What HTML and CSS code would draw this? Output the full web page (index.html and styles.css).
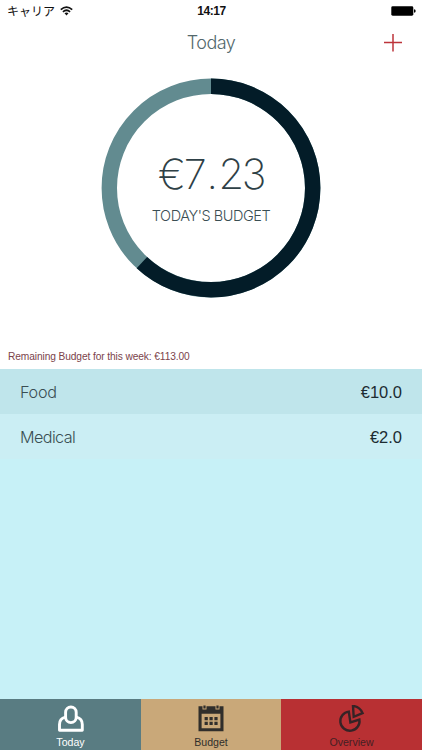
FILE: index.html
```
<!DOCTYPE html>
<html lang="en">
<head>
<meta charset="utf-8">
<title>Today</title>
<link rel="stylesheet" href="styles.css">
</head>
<body>
<div class="app">
  <header class="status">
    <div class="carrier"><span lang="ja">キャリア</span>
      <svg width="13" height="10" viewBox="0 0 13 10" fill="none" stroke="#111" stroke-width="1.7"><path d="M.8 3.6Q6.5-1.5 12.2 3.6M2.9 5.8Q6.5 2.7 10.1 5.8"/><path d="M4.5 7.3Q6.5 5.8 8.5 7.3L6.5 9.4Z" fill="#111" stroke="none"/></svg>
    </div>
    <div class="clock">14:17</div>
    <svg class="battery" width="25" height="10" viewBox="0 0 25 10"><rect x=".3" y=".3" width="22" height="9.4" rx="1.4"/><path d="M23 3.2q1.7.3 1.7 1.8T23 6.8z"/></svg>
  </header>
  <nav class="navbar">
    <h1 class="title">Today</h1>
    <svg class="add" width="18" height="18" viewBox="0 0 18 18" stroke="#bd343b" stroke-width="1.5"><path d="M0 8.5H18M9 0V17.5"/></svg>
  </nav>
  <main class="summary">
    <div class="dial">
      <svg class="ring" width="220" height="220" viewBox="0 0 220 220" fill="none" stroke-width="15.4">
        <circle cx="110" cy="110" r="101.7" stroke="#628b90"/>
        <circle cx="110" cy="110" r="101.7" stroke="#031c28" pathLength="1000" stroke-dasharray="619 381" transform="rotate(-90 110 110)"/>
      </svg>
      <div class="amount">€7<span class="point">.</span>23</div>
      <div class="caption">TODAY'S BUDGET</div>
    </div>
    <p class="remaining">Remaining Budget for this week: €113.00</p>
  </main>
  <ul class="expenses">
    <li class="row row-dark"><span class="name food">Food</span><span class="value">€10.0</span></li>
    <li class="row"><span class="name">Medical</span><span class="value">€2.0</span></li>
  </ul>
  <footer class="tabs">
    <div class="tab tab-today">
      <svg width="28" height="28" viewBox="0 0 28 28" fill="none" stroke="#fff" stroke-width="2.9" stroke-linejoin="round"><path d="M8.4 12.2C5 13 2.5 15.5 2.5 19.5V25.2H25.3V19.5C25.3 15.5 22.8 13 19.4 12.2"/><rect x="8.6" y="2" width="10.6" height="15.6" rx="5.3"/></svg>
      <span>Today</span>
    </div>
    <div class="tab tab-budget">
      <svg width="28" height="28" viewBox="0 0 28 28" fill="#302e2b"><path fill-rule="evenodd" d="M1.5 1.3H5.5V4.6H9.5V1.3H18.5V4.6H22.5V1.3H26.5V26.3H1.5ZM4.6 8.8V23.2H23.4V8.8Z"/><path d="M6.4 .4H8.6V3.5H6.4ZM19.4 .4H21.6V3.5H19.4Z"/><path d="M7.6 12h3.2v3.2H7.6zM12.5 12h3.2v3.2h-3.2zM17.4 12h3.2v3.2h-3.2zM7.6 16.8h3.2v3.2H7.6zM12.5 16.8h3.2v3.2h-3.2zM17.4 16.8h3.2v3.2h-3.2z"/></svg>
      <span>Budget</span>
    </div>
    <div class="tab tab-overview">
      <svg width="28" height="28" viewBox="0 0 28 28" fill="none" stroke="#352326" stroke-width="2.4" stroke-linejoin="miter"><path d="M10.8 6.6A9.6 9.6 0 1 0 21.4 14.6L12.4 17.4Z"/><path d="M15 .9L15.7 11.8L24.6 8.2C22.8 4 19.7 1.5 15 .9Z"/></svg>
      <span>Overview</span>
    </div>
  </footer>
</div>
</body>
</html>
```
FILE: styles.css
```
* { box-sizing: border-box; }
body {
  margin: 0;
  font-family: Inter, "Liberation Sans", "Noto Sans CJK JP", sans-serif;
  font-weight: 300;
  color: #3a4e53;
  background: #fff;
}
svg { display: block; }
.app { display: flex; flex-direction: column; height: 750px; overflow: hidden; }
.status {
  display: grid;
  grid-template-columns: 1fr auto 1fr;
  align-items: center;
  height: 22px;
  padding: 0 6px 0 7px;
  color: #111;
}
.carrier { display: flex; align-items: center; gap: 5px; font: 400 12px/20px "Noto Sans CJK JP", sans-serif; }
.clock { font: 700 12px/20px "Liberation Sans", sans-serif; letter-spacing: -0.4px; }
.battery { justify-self: end; }
.navbar {
  display: grid;
  grid-template-columns: 1fr auto 1fr;
  align-items: center;
  height: 42px;
  padding: 0 20px;
}
.title { grid-column: 2; margin: 0; font-size: 18px; line-height: 42px; font-weight: 300; letter-spacing: -0.5px; color: #52686c; }
.add { justify-self: end; }
.summary { height: 305px; padding: 14px 8px 0; }
.dial {
  display: grid;
  grid-template-rows: 74px 44px 40px;
  justify-items: center;
  width: 220px;
  height: 220px;
  margin: 0 auto;
}
.ring { grid-area: 1 / 1 / 4 / 2; height: 220px; }
.amount { grid-area: 2 / 1; font-size: 41.5px; line-height: 44px; font-weight: 200; letter-spacing: -2.3px; color: #2e4046; }
.point { padding: 0 3px 0 2px; }
.caption { grid-area: 3 / 1; font-size: 14.5px; line-height: 40px; letter-spacing: -0.45px; }
.remaining { margin: 50.5px 0 0; font: 400 10.2px/16px "Liberation Sans", sans-serif; letter-spacing: -0.1px; color: #7b434b; }
.expenses { flex: 1; margin: 0; padding: 0; list-style: none; background: #c7f1f7; }
.row {
  display: flex;
  justify-content: space-between;
  align-items: center;
  height: 45px;
  padding: 0 20px 0 20px;
  font-size: 16.2px;
  letter-spacing: -0.6px;
  background: #cbeef4;
}
.food { letter-spacing: -0.3px; }
.row-dark { background: #bfe5eb; }
.value { font: 400 16.5px/20px "Liberation Sans", sans-serif; letter-spacing: 0; color: #1c2c32; }
.tabs { display: grid; grid-template-columns: 141px 140px 141px; height: 51px; }
.tab {
  display: flex;
  flex-direction: column;
  align-items: center;
  padding-top: 6px;
  font: 400 10.6px/19px "Liberation Sans", sans-serif;
}
.tab-today { background: #597c82; color: #fff; }
.tab-budget { background: #c9a879; color: #302e2b; }
.tab-overview { background: #b83033; color: #451f23; }
```
